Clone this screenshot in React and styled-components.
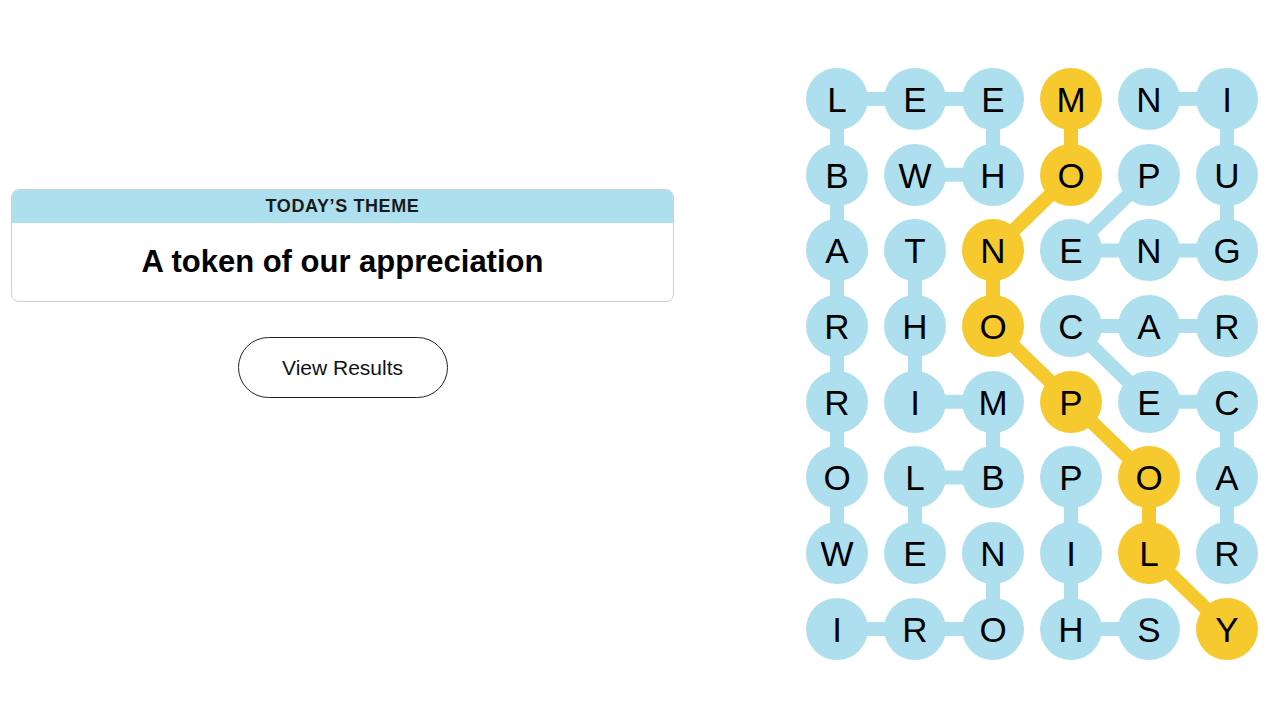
import React from 'react'
import styled, { createGlobalStyle } from 'styled-components'

const GlobalStyle = createGlobalStyle`
  html, body {
    margin: 0;
    padding: 0;
    background: #fff;
  }
  body {
    font-family: 'Liberation Sans', Arial, sans-serif;
    color: #121212;
  }
`

const BLUE = '#aedfee'
const YELLOW = '#f6c92e'
const COL_STEP = 78
const ROW_STEP = 75.7
const DOT = 62

const LETTERS = ['LEEMNI', 'BWHOPU', 'ATNENG', 'RHOCAR', 'RIMPEC', 'OLBPOA', 'WENILR', 'IROHSY']

// each found word as a path of [col, row]
const WORDS = [
  { path: [[1, 1], [2, 1], [2, 0], [1, 0], [0, 0], [0, 1], [0, 2], [0, 3], [0, 4], [0, 5], [0, 6]] },
  { path: [[1, 2], [1, 3], [1, 4], [2, 4], [2, 5], [1, 5], [1, 6]] },
  { path: [[0, 7], [1, 7], [2, 7], [2, 6]] },
  { path: [[4, 7], [3, 7], [3, 6], [3, 5]] },
  { path: [[4, 1], [3, 2], [4, 2], [5, 2], [5, 1], [5, 0], [4, 0]] },
  { path: [[5, 3], [4, 3], [3, 3], [4, 4], [5, 4], [5, 5], [5, 6]] },
  { spangram: true, path: [[3, 0], [3, 1], [2, 2], [2, 3], [3, 4], [4, 5], [4, 6], [5, 7]] }
]

const spangramCells = new Set(WORDS.filter((w) => w.spangram)[0].path.map(([c, r]) => `${c}-${r}`))

const Page = styled.div`
  display: flex;
  align-items: flex-start;
  width: 1280px;
  height: 720px;
  overflow: hidden;
`

const LeftPanel = styled.section`
  width: 663px;
  margin-left: 11px;
  padding-top: 189px;
  display: flex;
  flex-direction: column;
  align-items: center;
`

const ThemeCard = styled.div`
  width: 100%;
  box-sizing: border-box;
  border: 1px solid #cfcfcf;
  border-radius: 8px;
  overflow: hidden;
`

const ThemeHeader = styled.div`
  height: 33px;
  background: ${BLUE};
  display: flex;
  align-items: center;
  justify-content: center;
  font-family: 'Liberation Sans Narrow', 'Liberation Sans', Arial, sans-serif;
  font-weight: 700;
  font-size: 18px;
  letter-spacing: 0.6px;
  text-transform: uppercase;
  color: #1a1a1a;
`

const ThemeTitle = styled.div`
  height: 78px;
  display: flex;
  align-items: center;
  justify-content: center;
  font-family: 'Liberation Sans Narrow', 'Liberation Sans', Arial, sans-serif;
  font-weight: 700;
  font-size: 31px;
  color: #000;
`

const ResultsButton = styled.button`
  margin-top: 35px;
  width: 210px;
  height: 61px;
  border: 1px solid #222;
  border-radius: 31px;
  background: #fff;
  font-family: 'Liberation Sans Narrow', 'Liberation Sans', Arial, sans-serif;
  font-size: 21px;
  color: #121212;
  cursor: pointer;
`

const Board = styled.div`
  position: relative;
  margin-left: 132px;
  margin-top: 68px;
`

const Connectors = styled.svg`
  position: absolute;
  left: 0;
  top: 0;
  overflow: visible;
`

const LetterGrid = styled.div`
  position: relative;
  display: grid;
  grid-template-columns: repeat(6, ${DOT}px);
  grid-auto-rows: ${DOT}px;
  column-gap: ${COL_STEP - DOT}px;
  row-gap: ${ROW_STEP - DOT}px;
`

const Letter = styled.div`
  width: ${DOT}px;
  height: ${DOT}px;
  border-radius: 50%;
  background: ${(p) => (p.$spangram ? YELLOW : BLUE)};
  display: flex;
  align-items: center;
  justify-content: center;
  font-family: 'Liberation Sans', Arial, sans-serif;
  font-size: 35px;
  color: #000;
  padding-top: 2px;
  box-sizing: border-box;
`

const center = ([c, r]) => `${DOT / 2 + c * COL_STEP},${DOT / 2 + r * ROW_STEP}`

export default function App() {
  return (
    <>
      <GlobalStyle />
      <Page>
        <LeftPanel>
          <ThemeCard>
            <ThemeHeader>Today’s Theme</ThemeHeader>
            <ThemeTitle>A token of our appreciation</ThemeTitle>
          </ThemeCard>
          <ResultsButton>View Results</ResultsButton>
        </LeftPanel>

        <Board>
          <Connectors width={DOT + 5 * COL_STEP} height={DOT + 7 * ROW_STEP}>
            {WORDS.map((w, i) => (
              <polyline
                key={i}
                points={w.path.map(center).join(' ')}
                fill='none'
                stroke={w.spangram ? YELLOW : BLUE}
                strokeWidth={14}
                strokeLinejoin='round'
                strokeLinecap='round'
              />
            ))}
          </Connectors>
          <LetterGrid>
            {LETTERS.map((row, r) =>
              row.split('').map((ch, c) => (
                <Letter key={`${c}-${r}`} $spangram={spangramCells.has(`${c}-${r}`)}>
                  {ch}
                </Letter>
              ))
            )}
          </LetterGrid>
        </Board>
      </Page>
    </>
  )
}
